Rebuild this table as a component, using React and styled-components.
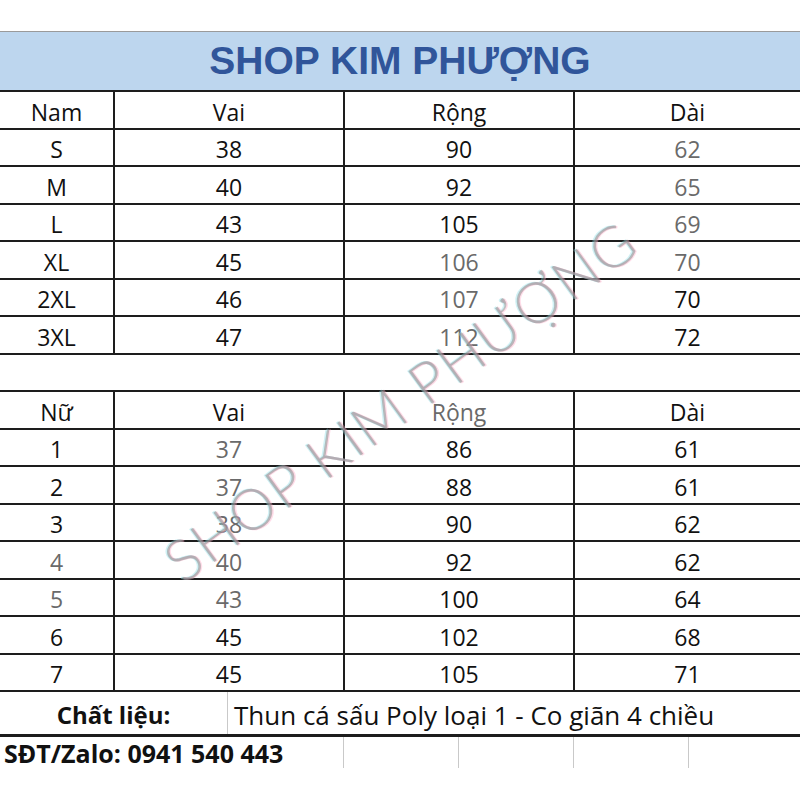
import React from "react";
import styled, { createGlobalStyle } from "styled-components";

const GlobalStyle = createGlobalStyle`
  * {
    box-sizing: border-box;
  }

  body {
    margin: 0;
    background: #ffffff;
    font-family: "Open Sans", "Noto Sans", sans-serif;
    color: #111111;
  }
`;

const Page = styled.div`
  position: relative;
  width: 800px;
  height: 800px;
  padding-top: 31px;
  overflow: hidden;
  background: #ffffff;
`;

const TitleBand = styled.div`
  height: 61px;
  display: flex;
  align-items: center;
  justify-content: center;
  background: #bdd6ee;
  border-top: 1px solid #9a9a9a;
  border-bottom: 2px solid #1d1d1d;

  h1 {
    margin: 0;
    font-family: "Liberation Sans", Arial, sans-serif;
    font-size: 39px;
    font-weight: 700;
    color: #30559a;
    letter-spacing: 0;
  }
`;

const Row = styled.div`
  display: grid;
  grid-template-columns: 113px 230px 230px 1fr;
  height: 37.5px;
  border-bottom: 2px solid #1d1d1d;
`;

const Gap = styled.div`
  height: 37.5px;
  border-bottom: 2px solid #1d1d1d;
`;

const Cell = styled.div`
  display: flex;
  align-items: flex-end;
  justify-content: center;
  font-size: 23px;
  line-height: 30px;
  padding-bottom: 1px;
  color: ${(props) => (props.$muted ? "#6a6a6a" : "#111111")};

  & + & {
    border-left: 2px solid #1d1d1d;
  }
`;

const MaterialRow = styled.div`
  display: grid;
  grid-template-columns: 228px 1fr;
  height: 45px;
  border-bottom: 3px solid #1d1d1d;
`;

const MaterialLabel = styled.div`
  display: flex;
  align-items: flex-end;
  justify-content: center;
  padding-bottom: 4px;
  font-size: 24px;
  font-weight: 700;
  line-height: 30px;
  border-right: 1px solid #c9c9c9;
`;

const MaterialValue = styled.div`
  display: flex;
  align-items: flex-end;
  padding: 0 0 4px 6px;
  font-size: 26px;
  line-height: 30px;
  white-space: nowrap;
`;

const ContactRow = styled.div`
  display: grid;
  grid-template-columns: 343px 115px 115px 115px 1fr;
  height: 31px;
`;

const ContactCell = styled.div`
  display: flex;
  align-items: flex-end;

  & + & {
    border-left: 1px solid #c9c9c9;
  }
`;

const Contact = styled.span`
  padding-left: 4px;
  font-size: 25px;
  font-weight: 700;
  line-height: 30px;
  white-space: nowrap;
`;

const Watermark = styled.div`
  position: absolute;
  inset: 0;
  display: flex;
  align-items: center;
  justify-content: center;
  pointer-events: none;

  span {
    transform: rotate(-36deg);
    font-family: Lato, "Open Sans", sans-serif;
    font-weight: 300;
    font-size: 57px;
    letter-spacing: 2px;
    white-space: nowrap;
    color: rgba(140, 140, 140, 0.55);
    text-shadow: 1px 1px 0 rgba(255, 170, 200, 0.4),
      -1px -1px 0 rgba(140, 220, 230, 0.4);
  }
`;

// "~" marks a value printed in grey in the original sheet
const men = [
  ["Nam", "Vai", "Rộng", "Dài"],
  ["S", "38", "90", "~62"],
  ["M", "40", "92", "~65"],
  ["L", "43", "105", "~69"],
  ["XL", "45", "~106", "~70"],
  ["2XL", "46", "~107", "70"],
  ["3XL", "47", "~112", "72"],
];

const women = [
  ["Nữ", "Vai", "~Rộng", "Dài"],
  ["1", "~37", "86", "61"],
  ["2", "~37", "88", "61"],
  ["3", "~38", "90", "62"],
  ["~4", "~40", "92", "62"],
  ["~5", "~43", "100", "64"],
  ["6", "45", "102", "68"],
  ["7", "45", "105", "71"],
];

const SizeRows = ({ rows }) =>
  rows.map((row, i) => (
    <Row key={i}>
      {row.map((value, j) => {
        const muted = value.startsWith("~");
        return (
          <Cell key={j} $muted={muted}>
            {muted ? value.slice(1) : value}
          </Cell>
        );
      })}
    </Row>
  ));

const App = () => {
  return (
    <Page>
      <GlobalStyle />
      <TitleBand>
        <h1>SHOP KIM PHƯỢNG</h1>
      </TitleBand>

      <SizeRows rows={men} />
      <Gap />
      <SizeRows rows={women} />

      <MaterialRow>
        <MaterialLabel>Chất liệu:</MaterialLabel>
        <MaterialValue>Thun cá sấu Poly loại 1 - Co giãn 4 chiều</MaterialValue>
      </MaterialRow>

      <ContactRow>
        <ContactCell>
          <Contact>SĐT/Zalo: 0941 540 443</Contact>
        </ContactCell>
        <ContactCell />
        <ContactCell />
        <ContactCell />
        <ContactCell />
      </ContactRow>

      <Watermark>
        <span>SHOP KIM PHƯỢNG</span>
      </Watermark>
    </Page>
  );
};

export default App;
